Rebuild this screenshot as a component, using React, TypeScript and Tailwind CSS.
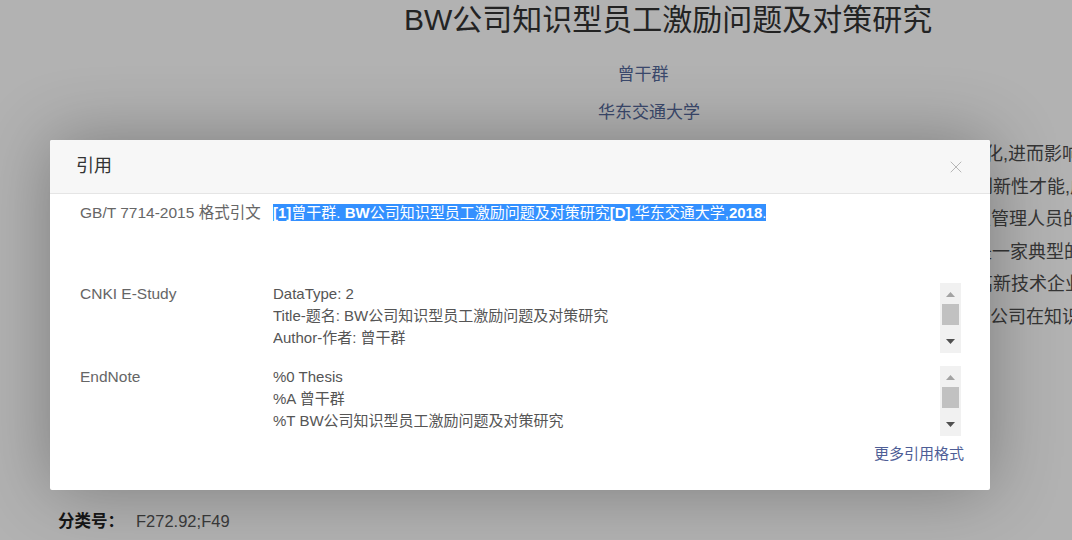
import { X } from 'lucide-react'

const font = 'font-["Liberation_Sans","Noto_Sans_CJK_SC",sans-serif]'

const abstractLines = [
  { text: '随着知识经济的到来,企业之间的竞争日益激烈,知识型员工的流动性不断增强,企业的人才结构发生变化,进而影响', pr: 'pr-[8px]' },
  { text: '知识型员工具有较高的个人素质、专业技能和创新性才能,成', pr: 'pr-0' },
  { text: '知识型员工包括企业的技术人员和企业管理人员的', pr: 'pr-[7px]' },
  { text: '高新技术企业中BW公司是一家典型的', pr: 'pr-[6px]' },
  { text: '作为一家知识密集型的高新技术企业', pr: 'pr-[5px]' },
  { text: '本文通过问卷调查分析了BW公司在知识', pr: 'pr-[8px]' },
]

function Triangle({ up, color }: { up?: boolean; color: string }) {
  return (
    <svg width="9" height="5" viewBox="0 0 9 5" className="block">
      <path d={up ? 'M0 5 L4.5 0 L9 5 Z' : 'M0 0 L4.5 5 L9 0 Z'} fill={color} />
    </svg>
  )
}

function FakeScrollbar() {
  return (
    <div className="relative w-[21px] h-full bg-[#f1f1f1] shrink-0">
      <div className="absolute left-0 right-0 top-[9px] flex justify-center">
        <Triangle up color="#a3a3a3" />
      </div>
      <div className="absolute left-[2px] right-[2px] top-[21px] h-[21px] bg-[#c1c1c1]" />
      <div className="absolute left-0 right-0 top-[56px] flex justify-center">
        <Triangle color="#505050" />
      </div>
    </div>
  )
}

function CiteBox({ label, lines }: { label: string; lines: string[] }) {
  return (
    <div className="flex">
      <div className="w-[193px] shrink-0 text-[15.5px] leading-[22px] text-[#666]">{label}</div>
      <div className="flex w-[688px] h-[70px] overflow-hidden">
        <div className="flex-1 text-[15px] leading-[22px] text-[#555]">
          {lines.map((l) => (
            <div key={l} className="whitespace-nowrap">{l}</div>
          ))}
        </div>
        <FakeScrollbar />
      </div>
    </div>
  )
}

export default function App() {
  return (
    <div className={`relative w-[1072px] h-[540px] overflow-hidden bg-white ${font}`}>
      {/* page behind the dialog */}
      <div className="h-[40px] pl-[404px] text-[30px] leading-[40px] text-[#333] whitespace-nowrap">
        BW公司知识型员工激励问题及对策研究
      </div>
      <div className="mt-[24px] pl-[234px] pr-[20px] text-center text-[17px] leading-[22px] text-[#55699b]">
        曾干群
      </div>
      <div className="mt-[16px] pl-[246px] pr-[20px] text-center text-[17px] leading-[22px] text-[#55699b]">
        华东交通大学
      </div>
      <div className="mt-[14px] w-[1088px] text-[18px] leading-[32.5px] text-[#4d4d4d]">
        {abstractLines.map((l) => (
          <div key={l.text} className={`flex justify-end whitespace-nowrap ${l.pr}`}>
            <span>{l.text}</span>
          </div>
        ))}
      </div>
      <div className="mt-[177px] pl-[58px] flex items-center text-[16.5px] leading-[22px]">
        <span className="font-bold text-[#222]">分类号：</span>
        <span className="ml-[12px] text-[#555]">F272.92;F49</span>
      </div>

      {/* overlay */}
      <div className="absolute inset-0 bg-black/30" />

      {/* dialog */}
      <div className="absolute left-[50px] top-[140px] w-[940px] h-[350px] bg-white rounded-[2px] shadow-[0_0_70px_rgba(0,0,0,0.3)]">
        <div className="h-[54px] flex items-center justify-between pl-[26px] pr-[24px] bg-[#f7f7f7] border-b border-[#e5e5e5] rounded-t-[2px]">
          <span className="text-[18px] text-[#333]">引用</span>
          <X size={20} strokeWidth={1} className="text-[#aaa]" />
        </div>
        <div className="pt-[8px] pl-[30px] pr-[26px]">
          <div className="flex min-h-[81px]">
            <div className="w-[193px] shrink-0 text-[15.5px] leading-[22px] text-[#666]">GB/T 7714-2015 格式引文</div>
            <div className="text-[15px] leading-[22px]">
              <span className="bg-[#3390ff] text-white">
                <span className="font-semibold">[1]</span>曾干群. <span className="font-semibold">BW</span>公司知识型员工激励问题及对策研究<span className="font-semibold">[D]</span>.华东交通大学,<span className="font-semibold">2018</span>.
              </span>
            </div>
          </div>
          <CiteBox
            label="CNKI E-Study"
            lines={['DataType: 2', 'Title-题名: BW公司知识型员工激励问题及对策研究', 'Author-作者: 曾干群']}
          />
          <div className="h-[13px]" />
          <CiteBox label="EndNote" lines={['%0 Thesis', '%A 曾干群', '%T BW公司知识型员工激励问题及对策研究']} />
          <div className="mt-[8px] text-right text-[15px] leading-[20px] text-[#4e5e96]">更多引用格式</div>
        </div>
      </div>
    </div>
  )
}
